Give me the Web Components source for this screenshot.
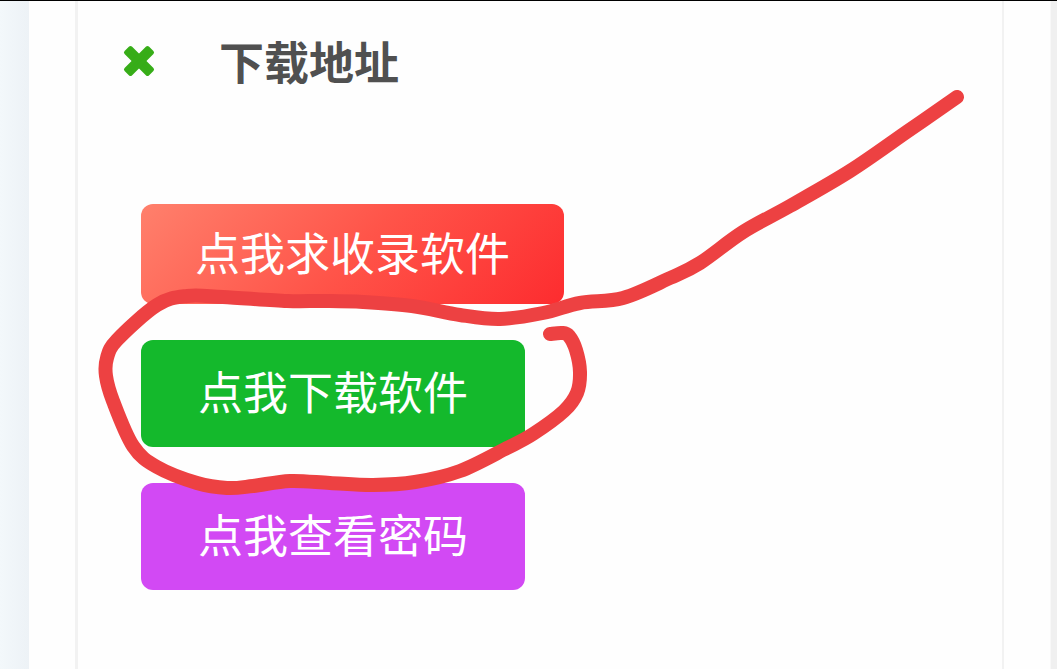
<!DOCTYPE html>
<html lang="zh-CN">
<head>
<meta charset="utf-8">
<meta name="viewport" content="width=device-width, initial-scale=1">
<title>下载地址</title>
<style>
  html, body {
    margin: 0;
    height: 100%;
  }
  body {
    font-family: "Noto Sans CJK SC", sans-serif;
    overflow: hidden;
  }
</style>
</head>
<body>
<download-page>
  <section-title>下载地址</section-title>
  <button-list>
    <link-button kind="request">点我求收录软件</link-button>
    <link-button kind="download">点我下载软件</link-button>
    <link-button kind="password">点我查看密码</link-button>
  </button-list>
  <pen-mark slot="overlay"></pen-mark>
</download-page>

<script>
class DownloadPage extends HTMLElement {
  constructor() {
    super();
    const template = document.createElement("template");
    template.innerHTML = `
      <style>
        :host {
          display: flex;
          box-sizing: border-box;
          position: relative;
          min-height: 100vh;
          border-top: 1px solid #000;
          padding: 0 6px 0 29px;
          background: linear-gradient(90deg, #f3f8fb 0, #edf2f6 29px, #f0f0f0 29px);
        }
        main {
          flex: 1;
          display: flex;
          padding: 0 46px;
          background: #fefefe;
          border-right: 1px solid #f8f8f8;
        }
        article {
          flex: 1;
          box-sizing: border-box;
          padding: 28px 44px;
          border: solid #f2f2f2;
          border-width: 0 2px 0 3px;
        }
      </style>
      <main>
        <article><slot></slot></article>
      </main>
      <slot name="overlay"></slot>
    `;
    this.attachShadow({ mode: "open" }).appendChild(template.content.cloneNode(true));
  }
}

class SectionTitle extends HTMLElement {
  constructor() {
    super();
    const template = document.createElement("template");
    template.innerHTML = `
      <style>
        :host {
          display: flex;
          align-items: center;
          gap: 63px;
          color: #505050;
        }
        svg {
          width: 34px;
          height: 34px;
        }
        h2 {
          margin: 0;
          font-size: 45px;
          line-height: 64px;
          font-weight: 700;
        }
      </style>
      <svg viewBox="0 0 34 34" fill="#37ad18" stroke="#37ad18" stroke-width="4" stroke-linejoin="round" aria-hidden="true">
        <path d="M8.5 4L4 8.5L25.5 30L30 25.5Z"/>
        <path d="M25.5 4L30 8.5L8.5 30L4 25.5Z"/>
      </svg>
      <h2><slot></slot></h2>
    `;
    this.attachShadow({ mode: "open" }).appendChild(template.content.cloneNode(true));
  }
}

class ButtonList extends HTMLElement {
  constructor() {
    super();
    const template = document.createElement("template");
    template.innerHTML = `
      <style>
        :host {
          display: flex;
          flex-direction: column;
          align-items: flex-start;
          gap: 36px;
          padding: 111px 0 0 19px;
        }
      </style>
      <slot></slot>
    `;
    this.attachShadow({ mode: "open" }).appendChild(template.content.cloneNode(true));
  }
}

class LinkButton extends HTMLElement {
  constructor() {
    super();
    const template = document.createElement("template");
    template.innerHTML = `
      <style>
        :host {
          display: block;
        }
        button {
          display: block;
          border: none;
          border-radius: 12px;
          padding: 19px 57px 24px;
          font: inherit;
          font-size: 45px;
          line-height: 64px;
          color: #fff;
          white-space: nowrap;
          cursor: pointer;
        }
        :host([kind="request"]) button {
          padding: 16px 54px 20px;
          background: linear-gradient(135deg, #ff806c, #ff5449 50%, #fd2c2f);
        }
        :host([kind="download"]) button {
          background: #14b92c;
        }
        :host([kind="password"]) button {
          background: #d249f4;
        }
      </style>
      <button type="button"><slot></slot></button>
    `;
    this.attachShadow({ mode: "open" }).appendChild(template.content.cloneNode(true));
  }
}

// hand drawn line around the download button
const strokePoints = [
  [957, 97], [908, 131], [850, 171], [790, 206], [743, 232], [700, 263],
  [670, 278], [623, 298], [580, 303], [543, 313], [500, 319], [460, 315],
  [412, 306], [363, 302], [323, 301], [287, 301], [223, 297], [187, 296],
  [157, 305], [117, 340], [107, 358], [106, 376], [113, 401], [133, 446],
  [157, 467], [197, 483], [227, 488], [253, 486], [290, 481], [330, 483],
  [373, 485], [415, 482], [460, 471], [507, 448], [533, 434], [564, 411],
  [577, 393], [580, 372], [576, 350], [569, 336], [562, 333], [550, 334]
];

class PenMark extends HTMLElement {
  constructor() {
    super();
    const template = document.createElement("template");
    template.innerHTML = `
      <style>
        :host {
          display: block;
          position: absolute;
          top: -1px;
          left: 0;
          pointer-events: none;
        }
        svg {
          display: block;
          overflow: visible;
        }
      </style>
      <svg width="1" height="1" aria-hidden="true">
        <path fill="none" stroke="#ed4142" stroke-width="14" stroke-linecap="round" stroke-linejoin="round"/>
      </svg>
    `;
    this.attachShadow({ mode: "open" }).appendChild(template.content.cloneNode(true));
    this.shadowRoot.querySelector("path").setAttribute("d", this.smooth(strokePoints));
  }

  // curve through all points
  smooth(points) {
    let d = `M${points[0]}`;
    for (let i = 0; i < points.length - 1; i++) {
      const p0 = points[i - 1] || points[i];
      const p1 = points[i];
      const p2 = points[i + 1];
      const p3 = points[i + 2] || p2;
      const c1 = [p1[0] + (p2[0] - p0[0]) / 6, p1[1] + (p2[1] - p0[1]) / 6];
      const c2 = [p2[0] - (p3[0] - p1[0]) / 6, p2[1] - (p3[1] - p1[1]) / 6];
      d += ` C${c1} ${c2} ${p2}`;
    }
    return d;
  }
}

customElements.define("download-page", DownloadPage);
customElements.define("section-title", SectionTitle);
customElements.define("button-list", ButtonList);
customElements.define("link-button", LinkButton);
customElements.define("pen-mark", PenMark);
</script>
</body>
</html>
